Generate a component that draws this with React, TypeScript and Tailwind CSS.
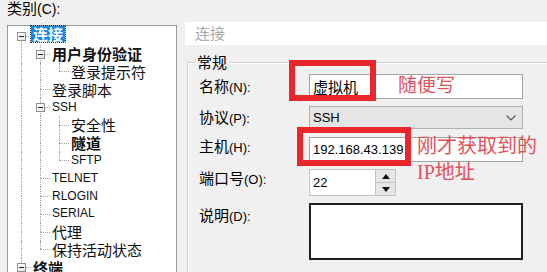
import type { ReactNode } from 'react'

type Guide = { up?: boolean; down?: boolean; right?: boolean; box?: boolean }

const V: Guide = { up: true, down: true }
const TEE: Guide = { up: true, down: true, right: true }
const CORNER: Guide = { up: true, right: true }

const treeRows: { label: string; cells: Guide[]; bold?: boolean; latin?: boolean; selected?: boolean }[] = [
  { label: '连接', cells: [{ down: true, right: true, box: true }], bold: true, selected: true },
  { label: '用户身份验证', cells: [V, { ...TEE, box: true }], bold: true },
  { label: '登录提示符', cells: [V, V, CORNER] },
  { label: '登录脚本', cells: [V, TEE] },
  { label: 'SSH', cells: [V, { ...TEE, box: true }], latin: true },
  { label: '安全性', cells: [V, V, TEE] },
  { label: '隧道', cells: [V, V, TEE], bold: true },
  { label: 'SFTP', cells: [V, V, CORNER], latin: true },
  { label: 'TELNET', cells: [V, TEE], latin: true },
  { label: 'RLOGIN', cells: [V, TEE], latin: true },
  { label: 'SERIAL', cells: [V, TEE], latin: true },
  { label: '代理', cells: [V, TEE] },
  { label: '保持活动状态', cells: [V, CORNER] },
  { label: '终端', cells: [{ ...TEE, box: true }], bold: true },
]

const cjk = "font-['Noto_Sans_CJK_SC',sans-serif]"
const latin = "font-['Liberation_Sans','Noto_Sans_CJK_SC',sans-serif]"

export default function App() {
  return (
    <div className={`relative flex h-[272px] w-[547px] overflow-hidden bg-[#f0f0f0] text-black ${cjk}`}>
      {/* left: category tree */}
      <div className="flex w-[185px] shrink-0 flex-col pl-[7px]">
        <div className="mb-[8px] text-[15px] leading-[15px]">
          类别<span className={`${latin} text-[14px]`}>(C):</span>
        </div>
        <div className="w-[170px] flex-1 border border-[#9a9a9a] bg-white pl-[4px] pt-[1px] leading-[17px]">
          {treeRows.map((row) => (
            <div key={row.label} className="flex h-[17.8px] items-center">
              {row.cells.map((g, i) => (
                <TreeGuide key={i} {...g} />
              ))}
              <span
                className={`whitespace-nowrap px-[2px] ${
                  row.latin ? `${latin} text-[12px]` : 'text-[15px]'
                } ${row.bold ? 'font-bold' : ''} ${
                  row.selected ? '-mt-[4px] bg-[#1a86e3] leading-[16px] text-white outline-1 outline-dotted outline-[#0b3c70]' : 'leading-[17px] text-[#111]'
                }`}
              >
                {row.label}
              </span>
            </div>
          ))}
        </div>
      </div>

      {/* right: settings */}
      <div className="flex flex-1 flex-col pt-[22px]">
        <div className="flex h-[23px] items-center bg-white pl-[10px] text-[15px] text-[#a8a8a8]">连接</div>

        <div className="relative ml-[2px] mt-[17px] w-[420px] flex-1 border-l border-t border-[#d3d3d3] pl-[11px] pt-[11px] leading-[20px] shadow-[inset_1px_1px_0_#ffffff]">
          <span className="absolute -top-[10px] left-[7px] bg-[#f0f0f0] px-[2px] text-[15px] leading-[18px]">常规</span>

          <FormRow label={<Label cn="名称" en="(N):" />}>
            <div className="flex h-[25px] w-[214px] items-center border border-[#a3a3a3] bg-white pl-[3px] text-[15px]">虚拟机</div>
          </FormRow>

          <FormRow className="mt-[7px]" label={<Label cn="协议" en="(P):" />}>
            <div className={`flex h-[23px] w-[214px] items-center justify-between border border-[#b0b0b0] bg-[#e5e5e5] pl-[3px] pr-[6px] ${latin} text-[13px]`}>
              SSH
              <svg width="10" height="6" viewBox="0 0 10 6" fill="none" stroke="#555" strokeWidth="1.2">
                <path d="M0.5 0.5 L5 5 L9.5 0.5" />
              </svg>
            </div>
          </FormRow>

          <FormRow className="mt-[8px]" labelClass="-translate-y-[3px]" label={<Label cn="主机" en="(H):" />}>
            <div className={`flex h-[25px] w-[214px] items-center border border-[#a3a3a3] bg-white pl-[3px] ${latin} text-[13px]`}>
              192.168.43.139
            </div>
          </FormRow>

          <FormRow className="mt-[7px]" labelClass="-translate-y-[4px]" label={<Label cn="端口号" en="(O):" />}>
            <div className="flex h-[27px]">
              <div className={`flex w-[67px] items-center border border-[#c4c4c4] bg-white pl-[3px] ${latin} text-[13px]`}>22</div>
              <div className="flex w-[20px] flex-col border border-l-0 border-[#c4c4c4] bg-[#f4f4f4]">
                <div className="flex flex-1 items-center justify-center border-b border-[#c4c4c4] bg-[#e6e6e6]">
                  <svg width="8" height="5" viewBox="0 0 8 5"><path d="M0 5 L4 0 L8 5 Z" fill="#111" /></svg>
                </div>
                <div className="flex flex-1 items-center justify-center bg-[#e6e6e6]">
                  <svg width="8" height="5" viewBox="0 0 8 5"><path d="M0 0 L4 5 L8 0 Z" fill="#111" /></svg>
                </div>
              </div>
            </div>
          </FormRow>

          <div className="mt-[7px] flex">
            <div className="w-[110px] shrink-0 pt-[1px]">
              <Label cn="说明" en="(D):" />
            </div>
            <div className="h-[57px] w-[214px] border-2 border-[#1e1e1e] bg-white" />
          </div>
        </div>
      </div>

      {/* annotations drawn over the dialog */}
      <div className="absolute left-[289px] top-[60px] h-[41px] w-[87px] border-[6px] border-[#e8262c]" />
      <div className="absolute left-[297px] top-[127px] h-[39px] w-[114px] border-[6px] border-[#e8262c]" />
      <div className="absolute left-[398px] top-[74px] text-[19px] leading-[24px] text-[#e3505a] font-['Liberation_Serif','Noto_Sans_CJK_SC',serif]">
        随便写
      </div>
      <div className="absolute left-[417px] top-[133px] text-[20px] leading-[26px] text-[#e3505a] font-['Liberation_Serif','Noto_Sans_CJK_SC',serif]">
        刚才获取到的
        <br />
        IP地址
      </div>
    </div>
  )
}

function Label({ cn, en }: { cn: string; en: string }) {
  return (
    <span className="whitespace-nowrap text-[15px] leading-[20px]">
      {cn}
      <span className={`${latin} text-[13px]`}>{en}</span>
    </span>
  )
}

function FormRow({
  label,
  children,
  className = '',
  labelClass = '',
}: {
  label: ReactNode
  children: ReactNode
  className?: string
  labelClass?: string
}) {
  return (
    <div className={`flex items-center ${className}`}>
      <div className={`flex h-[20px] w-[110px] shrink-0 items-center ${labelClass}`}>{label}</div>
      {children}
    </div>
  )
}

function TreeGuide({ up, down, right, box }: Guide) {
  return (
    <div className="relative h-full w-[19px] shrink-0">
      {up && <div className="absolute left-[9px] top-0 h-1/2 border-l border-dotted border-[#a0a0a0]" />}
      {down && <div className="absolute bottom-0 left-[9px] top-1/2 border-l border-dotted border-[#a0a0a0]" />}
      {right && <div className="absolute left-[9px] right-0 top-1/2 border-t border-dotted border-[#a0a0a0]" />}
      {box && (
        <div className="absolute left-[5px] top-[calc(50%-4px)] flex h-[9px] w-[9px] items-center justify-center border border-[#919191] bg-gradient-to-br from-white to-[#e4e4e4]">
          <div className="h-px w-[5px] bg-[#222]" />
        </div>
      )}
    </div>
  )
}
